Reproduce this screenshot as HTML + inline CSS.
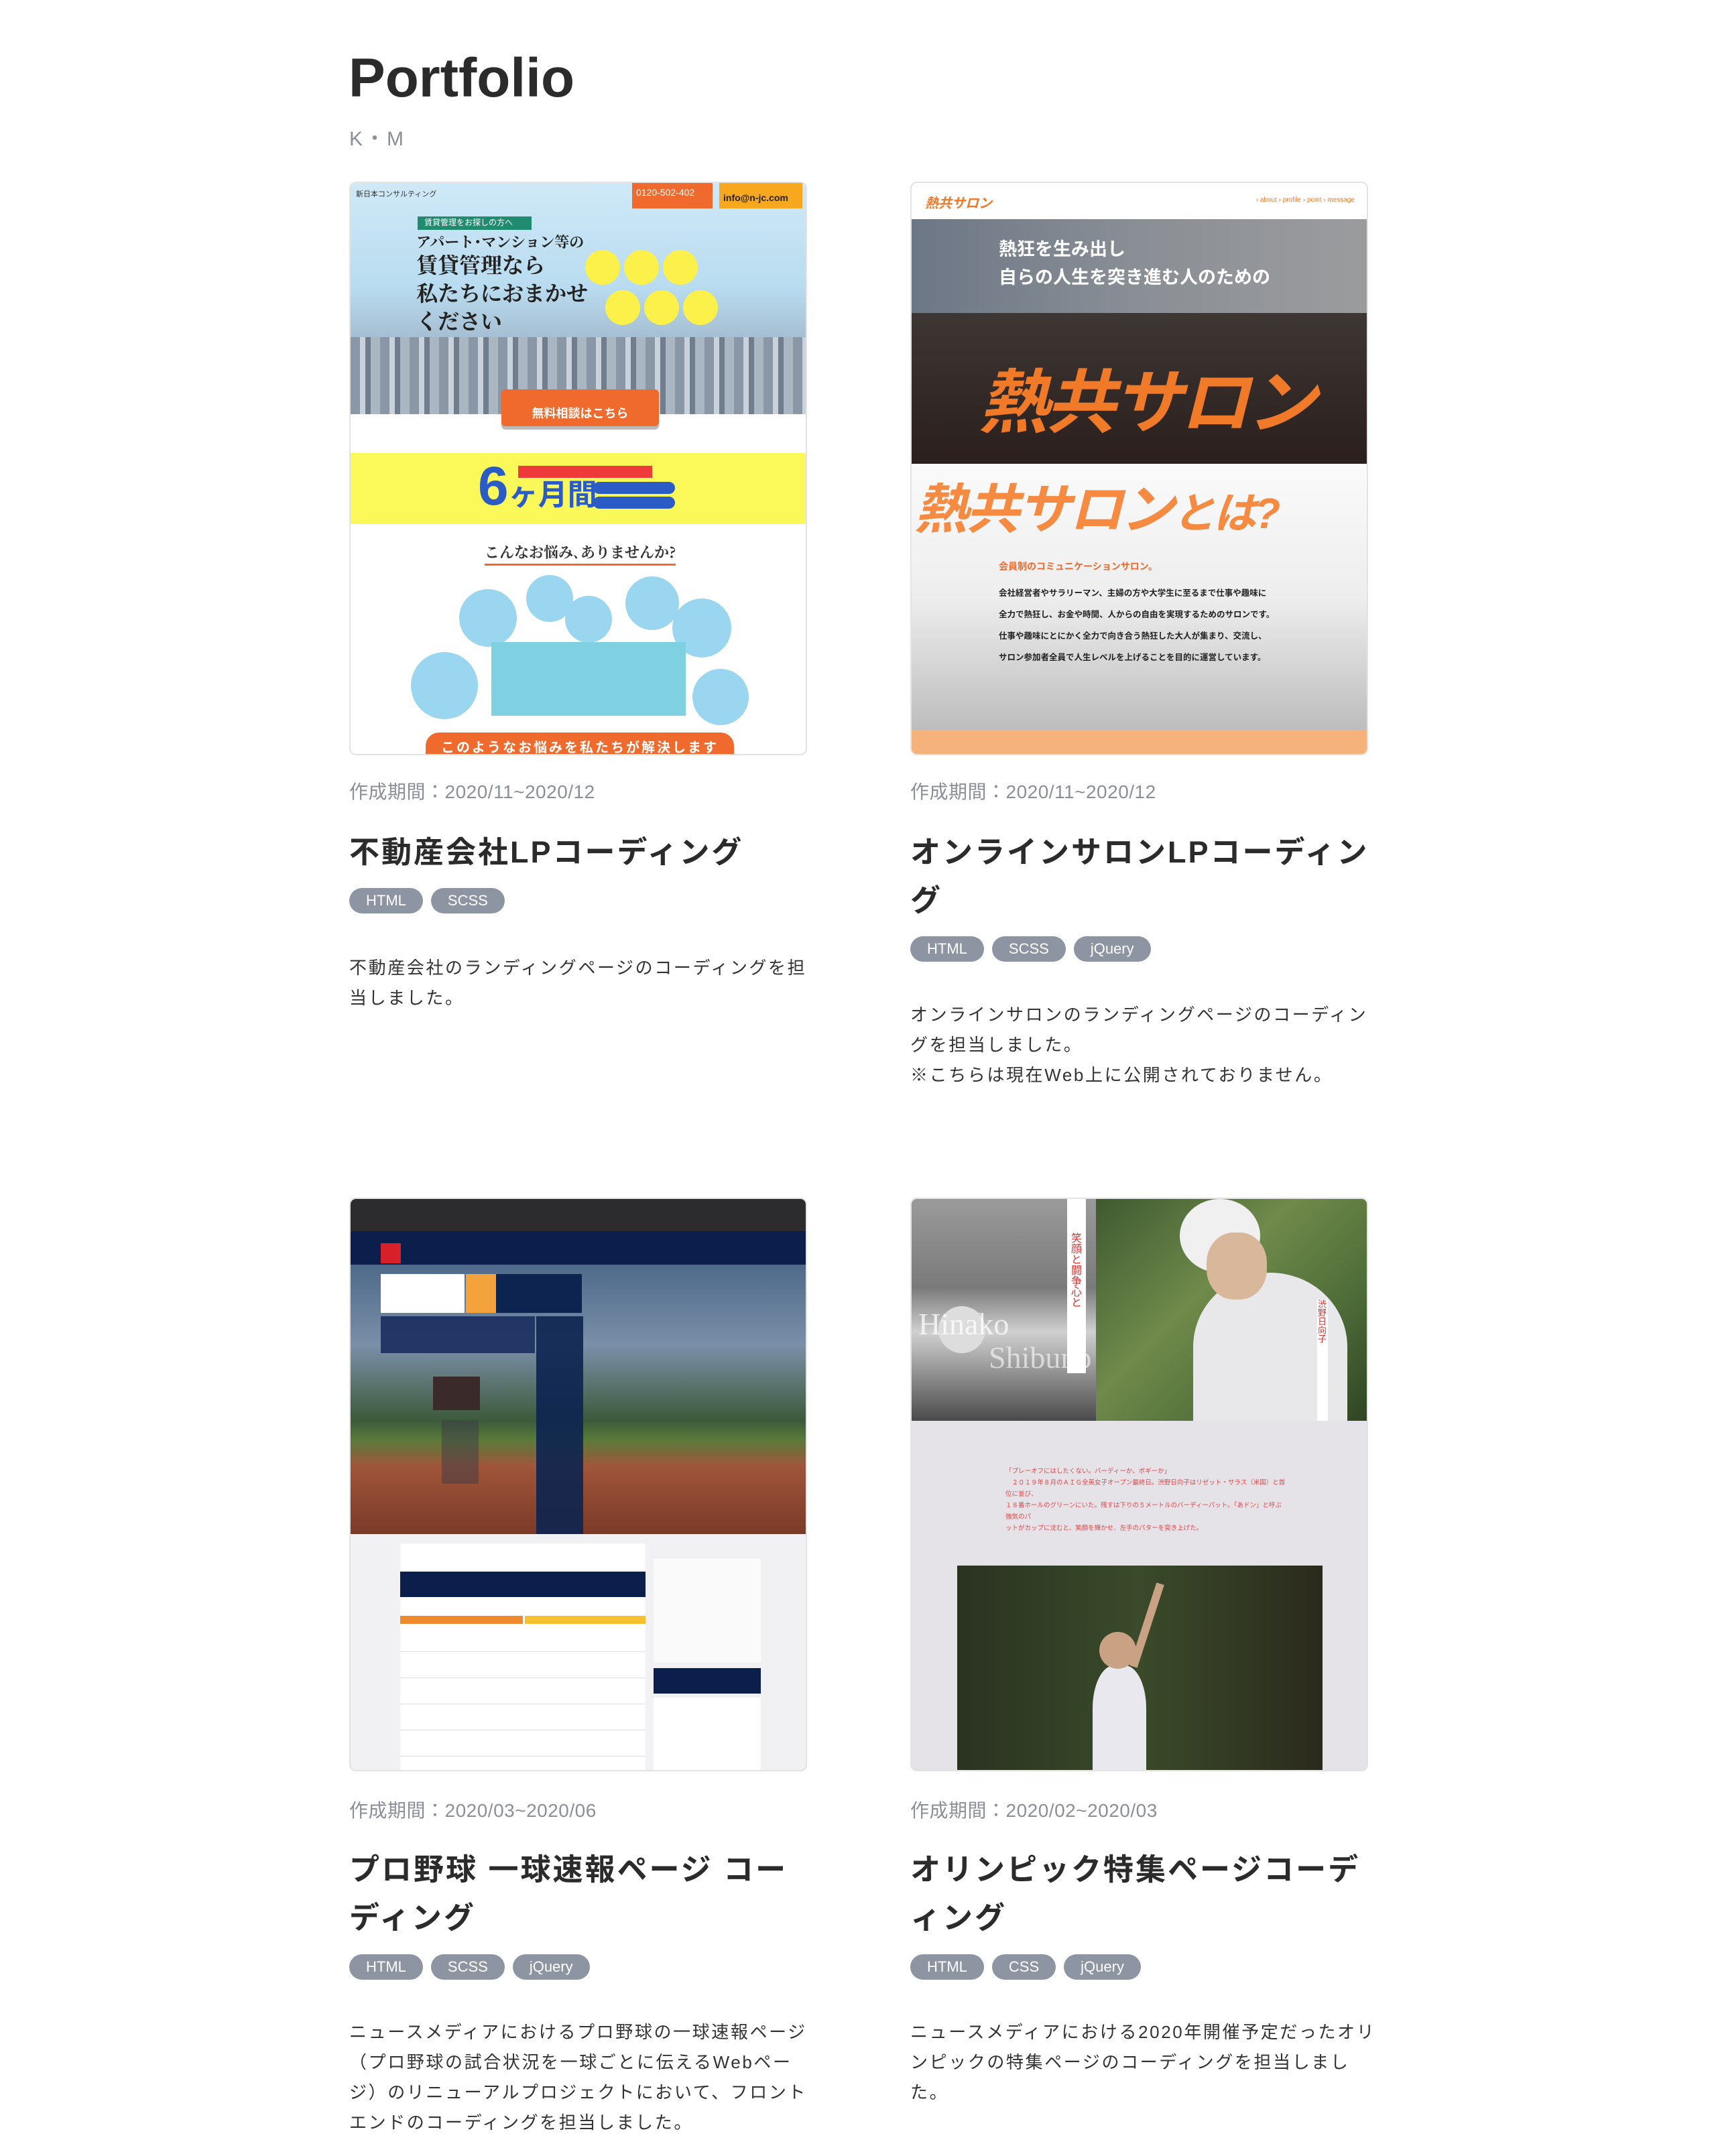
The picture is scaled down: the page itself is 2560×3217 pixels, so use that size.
<!DOCTYPE html>
<html><head><meta charset="utf-8">
<style>
*{margin:0;padding:0;box-sizing:border-box}
body{width:2560px;height:3217px;background:#fff;font-family:"Liberation Sans","Noto Sans CJK JP",sans-serif;color:#2b2b2b;position:relative;overflow:hidden}
.abs{position:absolute}
h1{position:absolute;left:520px;top:70px;font-size:82px;font-weight:bold;letter-spacing:0;color:#2b2b2b}
.km{position:absolute;left:521px;top:182px;font-size:30px;color:#8a8f99;letter-spacing:3px}
.card{position:absolute;width:683px;height:856px;border:2px solid #e3e3e3;border-radius:10px;overflow:hidden;background:#fff}
.date{position:absolute;font-size:28px;color:#8a8f99;letter-spacing:.5px}
.ttl{position:absolute;width:690px;font-size:45px;font-weight:bold;line-height:72px;letter-spacing:3px;color:#2b2b2b}
.tags{position:absolute;display:flex;gap:12px}
.tag{height:38px;border-radius:19px;background:#8e95a2;color:#fff;font-size:22px;line-height:38px;padding:0 25px}
.desc{position:absolute;width:700px;font-size:26px;line-height:45px;letter-spacing:2.6px;color:#333}
.c{border-radius:50%;position:absolute}
</style></head><body>
<h1>Portfolio</h1>
<div class="km">K・M</div>

<!-- card 1 -->
<div class="card" style="left:521px;top:271px">
 <div class="abs" style="left:0;top:0;width:683px;height:345px;background:linear-gradient(#cfe9f7 0%,#b9dcf0 45%,#9fb3c6 75%,#7e8d9e 100%)"></div>
 <div class="abs" style="left:0;top:230px;width:683px;height:115px;background:repeating-linear-gradient(90deg,#8a97a6 0 14px,#c9d2dc 14px 22px,#6f7d8c 22px 30px,#aab6c2 30px 44px)"></div>
 <div class="abs" style="left:8px;top:8px;font-size:11px;color:#333">新日本コンサルティング</div>
 <div class="abs" style="left:420px;top:0;width:120px;height:38px;background:#ef6a2c;color:#fff;font-size:14px;padding:6px">0120-502-402</div>
 <div class="abs" style="left:550px;top:0;width:124px;height:38px;background:#f7a81e;color:#222;font-size:14px;font-weight:bold;padding:14px 6px 0">info@n-jc.com</div>
 <div class="abs" style="left:100px;top:50px;width:170px;height:20px;background:#1f8b6f;color:#fff;font-size:12px;padding-left:10px">賃貸管理をお探しの方へ</div>
 <div class="abs" style="left:98px;top:72px;font-family:'Noto Serif CJK SC',serif;font-size:22px;font-weight:bold;color:#222">アパート･マンション等の</div>
 <div class="abs" style="left:98px;top:100px;font-family:'Noto Serif CJK SC',serif;font-size:32px;line-height:42px;font-weight:bold;color:#222">賃貸管理なら<br>私たちにおまかせ<br>ください</div>
 <div class="c" style="left:350px;top:100px;width:52px;height:52px;background:#fbf14a"></div>
 <div class="c" style="left:408px;top:100px;width:52px;height:52px;background:#fbf14a"></div>
 <div class="c" style="left:466px;top:100px;width:52px;height:52px;background:#fbf14a"></div>
 <div class="c" style="left:380px;top:160px;width:52px;height:52px;background:#fbf14a"></div>
 <div class="c" style="left:438px;top:160px;width:52px;height:52px;background:#fbf14a"></div>
 <div class="c" style="left:496px;top:160px;width:52px;height:52px;background:#fbf14a"></div>
 <div class="abs" style="left:225px;top:308px;width:235px;height:55px;background:#ef6a2c;border-radius:6px;color:#fff;font-size:18px;font-weight:bold;text-align:center;padding-top:22px;box-shadow:0 5px 0 #bbb">無料相談はこちら</div>
 <div class="abs" style="left:0;top:403px;width:683px;height:106px;background:#fbf95a"></div>
 <div class="abs" style="left:250px;top:422px;width:200px;height:18px;background:#ef3a3a"></div>
 <div class="abs" style="left:190px;top:403px;font-size:82px;font-weight:bold;color:#2b5bc4;line-height:100px">6<span style="font-size:44px">ヶ月間</span></div>
 <div class="abs" style="left:362px;top:446px;width:122px;height:18px;background:#2b5bc4;border-radius:9px"></div>
 <div class="abs" style="left:362px;top:468px;width:122px;height:18px;background:#2b5bc4;border-radius:9px"></div>
 <div class="abs" style="left:200px;top:535px;font-family:'Noto Serif CJK SC',serif;font-size:22px;font-weight:bold;color:#333;border-bottom:3px solid #ef6a2c;padding-bottom:2px">こんなお悩み､ありませんか?</div>
 <div class="c" style="left:162px;top:606px;width:86px;height:86px;background:#9bd6f0"></div>
 <div class="c" style="left:262px;top:585px;width:70px;height:70px;background:#9bd6f0"></div>
 <div class="c" style="left:320px;top:616px;width:70px;height:70px;background:#9bd6f0"></div>
 <div class="c" style="left:410px;top:587px;width:80px;height:80px;background:#9bd6f0"></div>
 <div class="c" style="left:480px;top:620px;width:88px;height:88px;background:#9bd6f0"></div>
 <div class="c" style="left:90px;top:700px;width:100px;height:100px;background:#9bd6f0"></div>
 <div class="c" style="left:510px;top:725px;width:84px;height:84px;background:#9bd6f0"></div>
 <div class="abs" style="left:210px;top:685px;width:290px;height:110px;background:#7fd0e0"></div>
 <div class="abs" style="left:112px;top:820px;width:460px;height:40px;background:#ef6a2c;border-radius:20px 20px 0 0;color:#fff;font-size:20px;font-weight:bold;text-align:center;padding-top:6px;letter-spacing:3px">このようなお悩みを私たちが解決します</div>
</div>
<div class="date" style="left:521px;top:1160px">作成期間：2020/11~2020/12</div>
<div class="ttl" style="left:521px;top:1236px">不動産会社LPコーディング</div>
<div class="tags" style="left:521px;top:1325px"><div class="tag">HTML</div><div class="tag">SCSS</div></div>
<div class="desc" style="left:521px;top:1422px">不動産会社のランディングページのコーディングを担当しました。</div>

<!-- card 2 -->
<div class="card" style="left:1358px;top:271px">
 <div class="abs" style="left:20px;top:14px;color:#ef7a2c;font-size:20px;font-weight:bold;font-style:italic">熱共サロン</div>
 <div class="abs" style="right:18px;top:20px;color:#ef7a2c;font-size:10px">› about › profile › point › message</div>
 <div class="abs" style="left:0;top:54px;width:683px;height:365px;background:linear-gradient(180deg,#5a5552 0%,#3d3633 40%,#2a1f1c 100%)"></div>
 <div class="abs" style="left:0;top:54px;width:683px;height:140px;background:linear-gradient(90deg,#6c7786,#8a8f95 50%,#9b9c9e)"></div>
 <div class="abs" style="left:130px;top:78px;color:#fff;font-size:27px;line-height:42px;font-weight:bold">熱狂を生み出し<br>自らの人生を突き進む人のための</div>
 <div class="abs" style="left:100px;top:243px;color:#f07a28;font-size:104px;font-weight:bold;font-style:italic;letter-spacing:-4px">熱共サロン</div>
 <div class="abs" style="left:0;top:419px;width:683px;height:397px;background:linear-gradient(180deg,#fafafa 0%,#eeeeee 50%,#bdbdbd 100%)"></div>
 <div class="abs" style="left:4px;top:423px;color:#f58a40;font-size:80px;font-weight:bold;font-style:italic;letter-spacing:-3px">熱共サロン<span style="font-size:64px">とは?</span></div>
 <div class="abs" style="left:130px;top:562px;color:#ef6a2c;font-size:14px;font-weight:bold">会員制のコミュニケーションサロン。</div>
 <div class="abs" style="left:130px;top:596px;color:#222;font-size:12.5px;line-height:32px;font-weight:bold">会社経営者やサラリーマン、主婦の方や大学生に至るまで仕事や趣味に<br>全力で熱狂し、お金や時間、人からの自由を実現するためのサロンです。<br>仕事や趣味にとにかく全力で向き合う熱狂した大人が集まり、交流し、<br>サロン参加者全員で人生レベルを上げることを目的に運営しています。</div>
 <div class="abs" style="left:0;top:816px;width:683px;height:40px;background:#f5b27a"></div>
</div>
<div class="date" style="left:1358px;top:1160px">作成期間：2020/11~2020/12</div>
<div class="ttl" style="left:1358px;top:1236px">オンラインサロンLPコーディング</div>
<div class="tags" style="left:1358px;top:1397px"><div class="tag">HTML</div><div class="tag">SCSS</div><div class="tag">jQuery</div></div>
<div class="desc" style="left:1358px;top:1492px">オンラインサロンのランディングページのコーディングを担当しました。<br>※こちらは現在Web上に公開されておりません。</div>

<!-- card 3 -->
<div class="card" style="left:521px;top:1787px">
 <div class="abs" style="left:0;top:0;width:683px;height:48px;background:#2c2c2e"></div>
 <div class="abs" style="left:0;top:48px;width:683px;height:50px;background:#0c1e4c"></div>
 <div class="abs" style="left:45px;top:66px;width:30px;height:30px;background:#d8202a"></div>
 <div class="abs" style="left:0;top:98px;width:683px;height:402px;background:linear-gradient(180deg,#4e6a8a 0%,#7a8fa8 30%,#3c5a3a 58%,#5a7a3a 65%,#a0553a 75%,#7a3a28 100%)"></div>
 <div class="abs" style="left:45px;top:112px;width:125px;height:58px;background:#fff"></div>
 <div class="abs" style="left:172px;top:112px;width:45px;height:58px;background:#f3a23c"></div>
 <div class="abs" style="left:217px;top:112px;width:128px;height:58px;background:#0d2450"></div>
 <div class="abs" style="left:45px;top:175px;width:230px;height:55px;background:rgba(20,40,90,.85)"></div>
 <div class="abs" style="left:277px;top:175px;width:70px;height:325px;background:rgba(12,36,80,.9)"></div>
 <div class="abs" style="left:123px;top:265px;width:70px;height:50px;background:#3a2a2a"></div>
 <div class="abs" style="left:136px;top:330px;width:55px;height:95px;background:rgba(60,60,70,.5)"></div>
 <div class="abs" style="left:0;top:500px;width:683px;height:356px;background:#f1f1f3"></div>
 <div class="abs" style="left:74px;top:514px;width:366px;height:350px;background:#fff"></div>
 <div class="abs" style="left:74px;top:556px;width:366px;height:38px;background:#0c1e4c"></div>
 <div class="abs" style="left:74px;top:622px;width:183px;height:12px;background:#ef8a2c"></div>
 <div class="abs" style="left:260px;top:622px;width:180px;height:12px;background:#f6c030"></div>
 <div class="abs" style="left:74px;top:637px;width:366px;height:222px;background:repeating-linear-gradient(180deg,#fff 0 38px,#ddd 38px 39px)"></div>
 <div class="abs" style="left:452px;top:537px;width:160px;height:155px;background:#fafafa"></div>
 <div class="abs" style="left:452px;top:700px;width:160px;height:38px;background:#0c1e4c"></div>
 <div class="abs" style="left:452px;top:744px;width:160px;height:140px;background:#fff"></div>
</div>
<div class="date" style="left:521px;top:2680px">作成期間：2020/03~2020/06</div>
<div class="ttl" style="left:521px;top:2754px">プロ野球 一球速報ページ コーディング</div>
<div class="tags" style="left:521px;top:2916px"><div class="tag">HTML</div><div class="tag">SCSS</div><div class="tag">jQuery</div></div>
<div class="desc" style="left:521px;top:3010px">ニュースメディアにおけるプロ野球の一球速報ページ（プロ野球の試合状況を一球ごとに伝えるWebページ）のリニューアルプロジェクトにおいて、フロントエンドのコーディングを担当しました。</div>

<!-- card 4 -->
<div class="card" style="left:1358px;top:1787px;background:#e5e2e8">
 <div class="abs" style="left:0;top:0;width:275px;height:331px;background:linear-gradient(180deg,#9a9a9a 0%,#7a7a7a 40%,#d0d0d0 60%,#4a4a4a 100%)"></div>
 <div class="abs" style="left:40px;top:160px;width:70px;height:70px;border-radius:50%;background:#ddd"></div>
 <div class="abs" style="left:10px;top:160px;font-family:'Liberation Serif',serif;font-size:46px;color:rgba(255,255,255,.75)">Hinako</div>
 <div class="abs" style="left:115px;top:210px;font-family:'Liberation Serif',serif;font-size:46px;color:rgba(255,255,255,.6)">Shibuno</div>
 <div class="abs" style="left:232px;top:0;width:28px;height:260px;background:#fff;color:#d33;font-size:16px;writing-mode:vertical-rl;padding:50px 5px 0">笑顔と闘争心と</div>
 <div class="abs" style="left:275px;top:0;width:408px;height:331px;background:linear-gradient(135deg,#3e5a30,#6f8a4a 40%,#4f6e38 70%,#2f4424)"></div>
 <div class="abs" style="left:420px;top:110px;width:230px;height:221px;border-radius:50% 50% 0 0;background:#e8e8ea"></div>
 <div class="abs" style="left:400px;top:0;width:120px;height:110px;border-radius:50%;background:#f0f0f0"></div>
 <div class="abs" style="left:440px;top:50px;width:90px;height:100px;border-radius:45%;background:#d9b79a"></div>
 <div class="abs" style="left:605px;top:150px;width:16px;height:181px;background:#fff;color:#d33;font-size:13px;writing-mode:vertical-rl">渋野日向子</div>
 <div class="abs" style="left:140px;top:398px;color:#e04848;font-size:9.5px;line-height:17px;width:420px">「プレーオフにはしたくない。バーディーか、ボギーか」<br>　２０１９年８月のＡＩＧ全英女子オープン最終日。渋野日向子はリゼット・サラス（米国）と首位に並び、<br>１８番ホールのグリーンにいた。残すは下りの５メートルのバーディーパット。「あドン」と呼ぶ強気のパ<br>ットがカップに沈むと、笑顔を輝かせ、左手のパターを突き上げた。</div>
 <div class="abs" style="left:68px;top:547px;width:545px;height:309px;background:linear-gradient(90deg,#2a3320,#3a4a2a 50%,#2a2a1c)"></div>
 <div class="abs" style="left:270px;top:696px;width:80px;height:160px;border-radius:40% 40% 0 0;background:#e8e8ee"></div>
 <div class="abs" style="left:280px;top:646px;width:55px;height:55px;border-radius:50%;background:#c9a284"></div>
 <div class="abs" style="left:345px;top:571px;width:12px;height:130px;background:#c9a284;transform:rotate(18deg)"></div>
</div>
<div class="date" style="left:1358px;top:2680px">作成期間：2020/02~2020/03</div>
<div class="ttl" style="left:1358px;top:2754px">オリンピック特集ページコーディング</div>
<div class="tags" style="left:1358px;top:2916px"><div class="tag">HTML</div><div class="tag">CSS</div><div class="tag">jQuery</div></div>
<div class="desc" style="left:1358px;top:3010px">ニュースメディアにおける2020年開催予定だったオリンピックの特集ページのコーディングを担当しました。</div>
</body></html>
